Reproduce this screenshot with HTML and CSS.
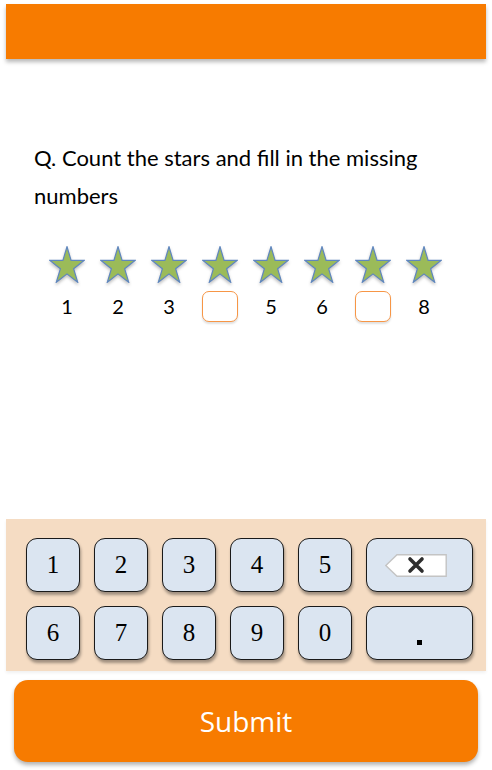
FILE: index.html
```html
<!DOCTYPE html>
<html lang="en">
<head>
<meta charset="utf-8">
<title>Count the stars</title>
<link rel="stylesheet" href="styles.css">
</head>
<body>
<div class="page">
  <header class="topbar"></header>

  <main class="content">
    <p class="question">Q. Count the stars and fill in the missing numbers</p>

    <div class="stars">
      <svg class="star" viewBox="-2 -2 104 104" preserveAspectRatio="none"><polygon points="50,0 61.8,38.2 100,38.2 69.1,61.8 80.9,100 50,76.4 19.1,100 30.9,61.8 0,38.2 38.2,38.2"/></svg>
      <svg class="star" viewBox="-2 -2 104 104" preserveAspectRatio="none"><polygon points="50,0 61.8,38.2 100,38.2 69.1,61.8 80.9,100 50,76.4 19.1,100 30.9,61.8 0,38.2 38.2,38.2"/></svg>
      <svg class="star" viewBox="-2 -2 104 104" preserveAspectRatio="none"><polygon points="50,0 61.8,38.2 100,38.2 69.1,61.8 80.9,100 50,76.4 19.1,100 30.9,61.8 0,38.2 38.2,38.2"/></svg>
      <svg class="star" viewBox="-2 -2 104 104" preserveAspectRatio="none"><polygon points="50,0 61.8,38.2 100,38.2 69.1,61.8 80.9,100 50,76.4 19.1,100 30.9,61.8 0,38.2 38.2,38.2"/></svg>
      <svg class="star" viewBox="-2 -2 104 104" preserveAspectRatio="none"><polygon points="50,0 61.8,38.2 100,38.2 69.1,61.8 80.9,100 50,76.4 19.1,100 30.9,61.8 0,38.2 38.2,38.2"/></svg>
      <svg class="star" viewBox="-2 -2 104 104" preserveAspectRatio="none"><polygon points="50,0 61.8,38.2 100,38.2 69.1,61.8 80.9,100 50,76.4 19.1,100 30.9,61.8 0,38.2 38.2,38.2"/></svg>
      <svg class="star" viewBox="-2 -2 104 104" preserveAspectRatio="none"><polygon points="50,0 61.8,38.2 100,38.2 69.1,61.8 80.9,100 50,76.4 19.1,100 30.9,61.8 0,38.2 38.2,38.2"/></svg>
      <svg class="star" viewBox="-2 -2 104 104" preserveAspectRatio="none"><polygon points="50,0 61.8,38.2 100,38.2 69.1,61.8 80.9,100 50,76.4 19.1,100 30.9,61.8 0,38.2 38.2,38.2"/></svg>
    </div>

    <div class="numbers">
      <span class="num">1</span>
      <span class="num">2</span>
      <span class="num">3</span>
      <span class="num blank"></span>
      <span class="num">5</span>
      <span class="num">6</span>
      <span class="num blank"></span>
      <span class="num">8</span>
    </div>
  </main>

  <section class="keypad">
    <button class="key">1</button>
    <button class="key">2</button>
    <button class="key">3</button>
    <button class="key">4</button>
    <button class="key">5</button>
    <button class="key key-wide" aria-label="Backspace">
      <svg class="bksp" viewBox="0 0 62 23" width="62" height="23">
        <polygon points="0.8,11.5 12,0.8 61.2,0.8 61.2,22.2 12,22.2" fill="#ffffff" stroke="#c4c4c4" stroke-width="1.4"/>
        <path d="M25 5 L37 17 M37 5 L25 17" stroke="#2e2e2e" stroke-width="3.6" stroke-linecap="round"/>
      </svg>
    </button>
    <button class="key">6</button>
    <button class="key">7</button>
    <button class="key">8</button>
    <button class="key">9</button>
    <button class="key">0</button>
    <button class="key key-wide key-dot"><span class="dot"></span></button>
  </section>

  <button class="submit">Submit</button>
</div>
</body>
</html>
```

FILE: styles.css
```css
* {
  box-sizing: border-box;
}

html, body {
  margin: 0;
  padding: 0;
  background: #ffffff;
}

.page {
  width: 492px;
  height: 770px;
  display: flex;
  flex-direction: column;
  font-family: "Lato", "Open Sans", sans-serif;
  color: #000;
}

.topbar {
  margin: 4px 6px 0;
  height: 55px;
  background: #f77b00;
  box-shadow: 0 3px 4px rgba(0, 0, 0, 0.28);
}

.content {
  flex: 1;
  padding: 0 0 0 34px;
}

.question {
  margin: 80px 40px 0 0;
  font-size: 22px;
  line-height: 38px;
  letter-spacing: 0;
}

.stars,
.numbers {
  display: flex;
  gap: 15px;
  padding-left: 15px;
}

.stars {
  margin-top: 31px;
}

.star {
  width: 36px;
  height: 37px;
  display: block;
  filter: drop-shadow(0 2px 1.5px rgba(0, 0, 0, 0.25));
}

.star polygon {
  fill: #9bbb59;
  stroke: #5f86bf;
  stroke-width: 1.2;
  vector-effect: non-scaling-stroke;
  stroke-linejoin: miter;
}

.numbers {
  margin-top: 8px;
  height: 31px;
  align-items: center;
}

.num {
  width: 36px;
  text-align: center;
  font-size: 20px;
  line-height: 31px;
}

.num.blank {
  height: 31px;
  border: 1.3px solid #f79646;
  border-radius: 7px;
  background: #fff;
  box-shadow: 0 2px 2px rgba(0, 0, 0, 0.12);
}

.keypad {
  margin: 0 6px;
  background: #f5dcc3;
  padding: 19px 14px 11px 20px;
  display: grid;
  grid-template-columns: repeat(5, 54px) 107px;
  grid-auto-rows: 54px;
  column-gap: 14px;
  row-gap: 14px;
  box-shadow: 0 2px 3px rgba(0, 0, 0, 0.06);
}

.key {
  margin: 0;
  padding: 0;
  border: 1.3px solid #1a1a1a;
  border-radius: 11px;
  background: #dbe5f1;
  font-family: "Liberation Serif", "Times New Roman", serif;
  font-size: 25px;
  color: #000;
  box-shadow: 1px 3px 3px rgba(0, 0, 0, 0.35);
  display: flex;
  align-items: center;
  justify-content: center;
}

.bksp {
  display: block;
  margin-left: -8px;
}

.key-dot {
  align-items: flex-end;
  padding: 0 0 14px 0;
}

.dot {
  width: 5px;
  height: 5px;
  background: #000;
  display: block;
}

.submit {
  margin: 9px 14px 8px;
  height: 82px;
  border: none;
  border-radius: 14px;
  background: #f77b00;
  color: #ffffff;
  font-family: "Open Sans", "Lato", sans-serif;
  font-size: 28px;
  box-shadow: 0 3px 4px rgba(0, 0, 0, 0.3);
  padding: 0;
}
```
